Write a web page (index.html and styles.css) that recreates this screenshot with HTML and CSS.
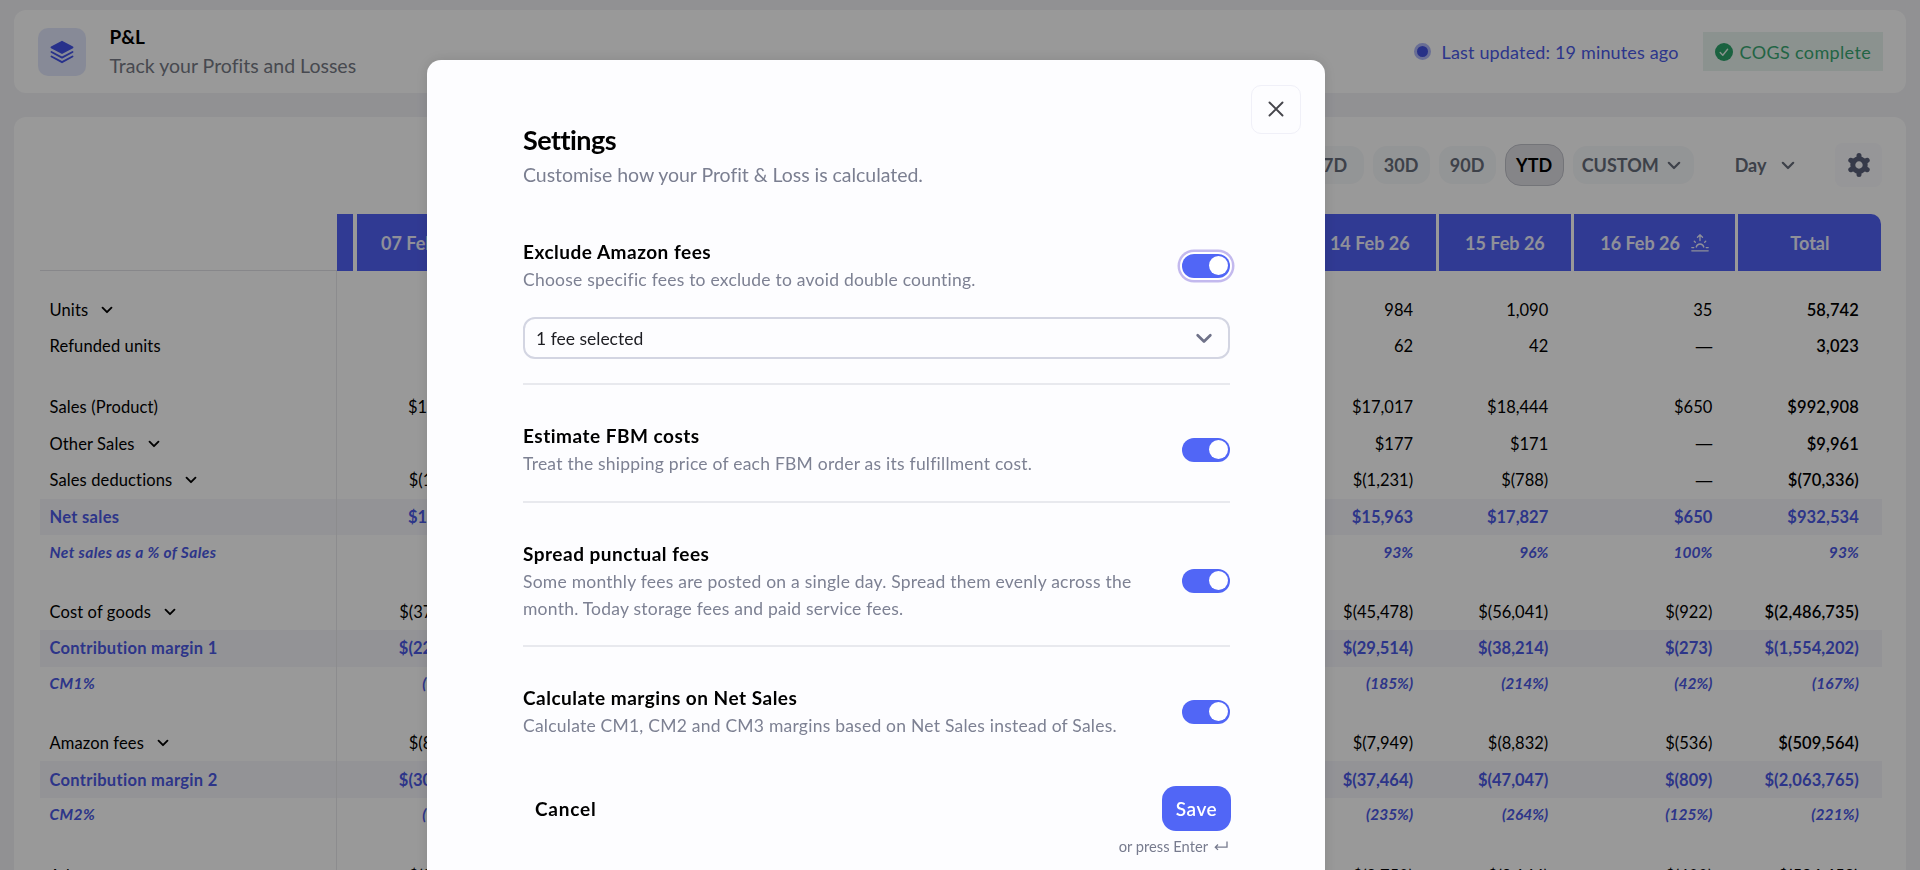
FILE: index.html
```html
<!DOCTYPE html>
<html lang="en">
<head>
<meta charset="UTF-8">
<meta name="viewport" content="width=device-width, initial-scale=1.0">
<title>P&amp;L</title>
<link rel="stylesheet" href="styles.css">
</head>
<body>
<svg class="defs" width="0" height="0">
    <symbol id="chevron" viewBox="0 0 14 9"><path d="M1.8 1.8 7 7l5.2-5.2" fill="none" stroke="currentColor" stroke-width="2.2" stroke-linecap="round" stroke-linejoin="round"/></symbol>
</svg>

<header class="card topbar">
    <div class="logo">
        <svg width="24" height="24" viewBox="0 0 24 24" fill="none" stroke="#4353e8" stroke-width="1.9" stroke-linecap="round" stroke-linejoin="round">
            <path d="M12 1.8 22.5 7.3 12 13 1.5 7.3z" fill="#4353e8"/>
            <path d="M1.5 12 12 17.6 22.5 12M1.5 16.5 12 22.2l10.5-5.7"/>
        </svg>
    </div>
    <div class="heading">
        <h1>P&amp;L</h1>
        <p>Track your Profits and Losses</p>
    </div>
    <div class="updated"><span class="dot"></span>Last updated: 19 minutes ago</div>
    <div class="cogs">
        <svg width="18" height="18" viewBox="0 0 18 18"><circle cx="9" cy="9" r="9" fill="#2ca36b"/><path d="m5.2 9.5 2.6 2.8 4.8-6" fill="none" stroke="#e3f5ec" stroke-width="1.4" stroke-linecap="round" stroke-linejoin="round"/></svg>
        COGS complete
    </div>
</header>

<main class="card panel">
    <div class="toolbar">
        <span class="pill">7D</span>
        <span class="pill">30D</span>
        <span class="pill">90D</span>
        <span class="pill active">YTD</span>
        <span class="pill custom">CUSTOM <svg width="14" height="9"><use href="#chevron"/></svg></span>
        <span class="period">Day <svg width="14" height="9"><use href="#chevron"/></svg></span>
        <span class="gear">
            <svg width="26" height="26" viewBox="-13 -13 26 26" fill="none" stroke="#5b617b">
                <circle r="6.2" stroke-width="5"/>
                <path stroke-width="5" stroke-linecap="round" d="M0-7.5V-9.5M0 7.5v2M6.5-3.75l1.7-1M6.5 3.75l1.7 1M-6.5-3.75l-1.7-1M-6.5 3.75l-1.7 1"/>
            </svg>
        </span>
    </div>

    <div class="table">
        <div class="row head">
            <span class="label"></span><b></b><b class="first-day">07 Feb 26</b><b class="skip"></b><b>14 Feb 26</b><b>15 Feb 26</b>
            <b>16 Feb 26
                <svg width="18" height="18" viewBox="0 0 18 18" fill="none" stroke="#eef0ff" stroke-width="1.3" stroke-linecap="round"><path d="M9 6.5V1M6.5 3.2 9 .8l2.5 2.4M5.2 13a3.9 3.9 0 0 1 7.6 0M3.3 7.3l1 1M14.7 7.3l-1 1M.8 13.6h2M15.2 13.6h2M.8 16.8h16.4"/></svg>
            </b>
            <b class="last">Total</b>
        </div>
        <div class="row first"><span class="label">Units <svg width="12" height="8"><use href="#chevron"/></svg></span><i></i><i>912</i><i>984</i><i>1,090</i><i>35</i><i>58,742</i></div>
        <div class="row"><span class="label">Refunded units</span><i></i><i>51</i><i>62</i><i>42</i><i class="dash">—</i><i>3,023</i></div>

        <div class="row gap"><span class="label">Sales (Product)</span><i></i><i>$16,984</i><i>$17,017</i><i>$18,444</i><i>$650</i><i>$992,908</i></div>
        <div class="row"><span class="label">Other Sales <svg width="12" height="8"><use href="#chevron"/></svg></span><i></i><i>$92</i><i>$177</i><i>$171</i><i class="dash">—</i><i>$9,961</i></div>
        <div class="row"><span class="label">Sales deductions <svg width="12" height="8"><use href="#chevron"/></svg></span><i></i><i>$(1,340)</i><i>$(1,231)</i><i>$(788)</i><i class="dash">—</i><i>$(70,336)</i></div>
        <div class="row sum"><span class="label">Net sales</span><i></i><i>$15,736</i><i>$15,963</i><i>$17,827</i><i>$650</i><i>$932,534</i></div>
        <div class="row ratio"><span class="label">Net sales as a % of Sales</span><i></i><i>92%</i><i>93%</i><i>96%</i><i>100%</i><i>93%</i></div>

        <div class="row gap"><span class="label">Cost of goods <svg width="12" height="8"><use href="#chevron"/></svg></span><i></i><i>$(37,945)</i><i>$(45,478)</i><i>$(56,041)</i><i>$(922)</i><i>$(2,486,735)</i></div>
        <div class="row sum"><span class="label">Contribution margin 1</span><i></i><i>$(22,209)</i><i>$(29,514)</i><i>$(38,214)</i><i>$(273)</i><i>$(1,554,202)</i></div>
        <div class="row ratio"><span class="label">CM1%</span><i></i><i>(141%)</i><i>(185%)</i><i>(214%)</i><i>(42%)</i><i>(167%)</i></div>

        <div class="row gap"><span class="label">Amazon fees <svg width="12" height="8"><use href="#chevron"/></svg></span><i></i><i>$(8,018)</i><i>$(7,949)</i><i>$(8,832)</i><i>$(536)</i><i>$(509,564)</i></div>
        <div class="row sum"><span class="label">Contribution margin 2</span><i></i><i>$(30,227)</i><i>$(37,464)</i><i>$(47,047)</i><i>$(809)</i><i>$(2,063,765)</i></div>
        <div class="row ratio"><span class="label">CM2%</span><i></i><i>(192%)</i><i>(235%)</i><i>(264%)</i><i>(125%)</i><i>(221%)</i></div>

        <div class="row gap ads"><span class="label">Ads costs</span><i></i><i>$(9,102)</i><i>$(8,750)</i><i>$(9,144)</i><i>$(600)</i><i>$(584,458)</i></div>
    </div>
</main>

<div class="overlay">
    <div class="modal">
        <button class="close"><svg width="16" height="16" viewBox="0 0 16 16" fill="none" stroke="#45454b" stroke-width="1.9" stroke-linecap="round"><path d="m1.5 1.5 13 13M14.5 1.5l-13 13"/></svg></button>
        <h2>Settings</h2>
        <p class="intro">Customise how your Profit &amp; Loss is calculated.</p>

        <section>
            <div class="setting">
                <div class="text"><h3>Exclude Amazon fees</h3><p>Choose specific fees to exclude to avoid double counting.</p></div>
                <span class="toggle focus"></span>
            </div>
            <div class="select">1 fee selected <svg width="18" height="11"><use href="#chevron"/></svg></div>
        </section>
        <section>
            <div class="setting">
                <div class="text"><h3>Estimate FBM costs</h3><p>Treat the shipping price of each FBM order as its fulfillment cost.</p></div>
                <span class="toggle"></span>
            </div>
        </section>
        <section>
            <div class="setting">
                <div class="text"><h3>Spread punctual fees</h3><p>Some monthly fees are posted on a single day. Spread them evenly across the month. Today storage fees and paid service fees.</p></div>
                <span class="toggle"></span>
            </div>
        </section>
        <section>
            <div class="setting">
                <div class="text"><h3>Calculate margins on Net Sales</h3><p>Calculate CM1, CM2 and CM3 margins based on Net Sales instead of Sales.</p></div>
                <span class="toggle"></span>
            </div>
        </section>

        <div class="actions">
            <button class="cancel">Cancel</button>
            <button class="save">Save</button>
        </div>
        <p class="hint">or press Enter <svg width="14" height="10" viewBox="0 0 14 10" fill="none" stroke="#777b8e" stroke-width="1.3"><path d="M13 .5v5.7H1.5M4 3.5 1.3 6.2 4 8.9"/></svg></p>
    </div>
</div>
</body>
</html>
```
FILE: styles.css
```css
* {
    box-sizing: border-box;
    margin: 0;
    padding: 0;
}
body {
    height: 100vh;
    overflow: hidden;
    padding: 10px 14px 0;
    background: #f2f2f6;
    font-family: Lato, "Liberation Sans", sans-serif;
    font-size: 16.5px;
    font-variant-ligatures: none;
    color: #000;
}
button {
    font-family: inherit;
    border: none;
    background: none;
}
.defs {
    display: block;
    position: absolute;
}
.card {
    background: #fff;
    border-radius: 12px;
}

/* top bar */
.topbar {
    display: flex;
    align-items: center;
    height: 83px;
    padding: 0 23px 0 24px;
}
.logo {
    display: flex;
    align-items: center;
    justify-content: center;
    width: 48px;
    height: 48px;
    border-radius: 10px;
    background: #e2e7fc;
}
.heading {
    margin: 0 0 0 23.5px;
}
.heading h1 {
    font-size: 19px;
    line-height: 28px;
    font-weight: 700;
}
.heading p {
    font-size: 19.5px;
    line-height: 30px;
    color: #777b85;
}
.updated {
    display: flex;
    align-items: center;
    gap: 11px;
    margin-left: auto;
    font-size: 18px;
    letter-spacing: 0.16px;
    color: #4c5ae8;
}
.dot {
    width: 17px;
    height: 17px;
    border-radius: 50%;
    border: 3px solid #b0b8f8;
    background: #4452e2;
}
.cogs {
    display: flex;
    align-items: center;
    gap: 7px;
    height: 39px;
    margin-left: 24px;
    padding: 0 12px;
    font-size: 18px;
    letter-spacing: 0.35px;
    color: #3aa873;
    background: #e8f3ee;
}

/* date range */
.panel {
    height: 753px;
    overflow: hidden;
    margin-top: 24px;
    padding: 26px 24px 0 26px;
    border-radius: 12px 12px 0 0;
}
.toolbar {
    display: flex;
    align-items: center;
    justify-content: flex-end;
    gap: 9px;
    height: 44px;
    font-size: 18px;
    font-weight: 700;
    color: #676d7b;
}
.pill {
    display: flex;
    align-items: center;
    justify-content: center;
    width: 57px;
    height: 38px;
    border-radius: 14px;
    background: #f6f8fa;
}
.pill.active {
    width: 59px;
    height: 42px;
    border: 1px solid #c0c1c9;
    border-radius: 16px;
    background: #dedee3;
    color: #000;
}
.pill.custom {
    justify-content: flex-start;
    width: 121px;
    padding-left: 9px;
    gap: 8px;
}
.period {
    display: flex;
    align-items: center;
    gap: 14px;
    margin-left: 32px;
}
.gear {
    display: flex;
    align-items: center;
    justify-content: center;
    width: 47px;
    height: 44px;
    margin-left: 31.5px;
    border-radius: 8px;
    background: #fafafd;
}

/* table */
.table {
    margin-top: 27px;
}
.row {
    display: grid;
    grid-template-columns: 293.4px 16px 131.6px 808.6px 131.6px 131.6px 160.5px 143px;
    column-gap: 3.6px;
    height: 36.6px;
    width: 1841.5px;
}
.row .label {
    display: flex;
    align-items: center;
    gap: 13px;
    margin-right: -3.6px;
    padding-left: 9.5px;
    border-right: 1px solid #e9e9ed;
    letter-spacing: 0.12px;
}
.row i {
    display: flex;
    align-items: center;
    justify-content: flex-end;
    font-style: normal;
    padding-right: 22.5px;
}
.row i:nth-of-type(2) {
    padding-right: 19px;
}
.row i:nth-of-type(3) {
    grid-column: 5;
}
.row i:last-child {
    font-weight: 600;
    letter-spacing: 0.1px;
}
.row i.dash {
    font-family: "Liberation Sans", sans-serif;
}
.row.head {
    height: 57px;
}
.head .label {
    border-right: none;
    border-bottom: 1px solid #e2e2e6;
}
.head b {
    display: flex;
    align-items: center;
    justify-content: center;
    gap: 11px;
    background: #5161f5;
    color: #eef0ff;
    font-size: 18px;
    font-weight: 700;
}
.head b.first-day {
    padding-right: 3px;
}
.head b.last {
    border-radius: 0 10px 0 0;
}
.row.first {
    height: 57px;
}
.row.first > * {
    padding-top: 20.4px;
}
.row.gap {
    height: 60.8px;
}
.row.gap > * {
    padding-top: 24.2px;
}
.row.ads > * {
    padding-top: 27px;
}
.row.sum {
    color: #4c59e4;
    font-weight: 700;
    background: #f5f5fb;
}
.row.sum .label {
    letter-spacing: 0.3px;
}
.row.ratio {
    height: 34px;
    font-size: 15.5px;
    font-weight: 700;
    color: #4c59e4;
}
.row.ratio > * {
    padding-bottom: 1px;
}
.row.ratio .label {
    letter-spacing: 0.4px;
}
.row.ratio .label,
.row.ratio i {
    font-style: italic;
}
.row.sum i:last-child,
.row.ratio i:last-child {
    font-weight: 700;
}

/* settings modal */
.overlay {
    position: fixed;
    inset: 0;
    overflow: hidden;
    background: rgba(0, 0, 0, 0.4);
}
.modal {
    position: relative;
    width: 898px;
    height: 840px;
    margin: 59.5px 0 0 427px;
    padding: 61.5px 95px 0 96px;
    border-radius: 14px;
    background: #fdfdff;
    box-shadow: 0 0 14px rgba(0, 0, 0, 0.12);
}
.close {
    position: absolute;
    top: 25px;
    right: 24px;
    display: flex;
    align-items: center;
    justify-content: center;
    width: 50px;
    height: 49px;
    border: 1px solid #f0f0f8;
    border-radius: 10px;
}
.modal h2 {
    font-size: 27px;
    line-height: 38px;
    font-weight: 700;
    letter-spacing: -0.55px;
}
.intro {
    font-size: 19.5px;
    line-height: 32px;
    letter-spacing: -0.04px;
    color: #7b7f91;
}
.modal section {
    padding-top: 37px;
    padding-bottom: 23.5px;
    border-bottom: 2px solid #e8e9ee;
}
.intro + section {
    padding-top: 47px;
    padding-bottom: 24px;
}
.modal section:nth-of-type(4) {
    border-bottom: none;
}
.setting {
    display: flex;
    align-items: center;
    justify-content: space-between;
}
.text {
    width: 630px;
}
.text h3 {
    font-size: 19px;
    line-height: 28px;
    font-weight: 700;
    letter-spacing: 0.5px;
}
.text p {
    font-size: 17.5px;
    line-height: 27px;
    letter-spacing: 0.23px;
    color: #7d8193;
}
.toggle {
    display: flex;
    align-items: center;
    justify-content: flex-end;
    width: 48px;
    height: 24px;
    padding-right: 2px;
    border-radius: 12px;
    background: #5166f6;
}
.toggle::after {
    content: "";
    width: 19px;
    height: 19px;
    border-radius: 50%;
    background: #fff;
}
.toggle.focus {
    box-shadow: 0 0 0 2px #fff, 0 0 0 4.5px #c3b9ee;
}
.select {
    display: flex;
    align-items: center;
    justify-content: space-between;
    height: 42px;
    margin-top: 24px;
    padding: 0 15px 0 11px;
    border: 2px solid #d3d5e2;
    border-radius: 12px;
    font-size: 17.5px;
    color: #1d1d22;
}
.select svg {
    color: #6f7289;
}
.actions {
    display: flex;
    align-items: center;
    justify-content: space-between;
    margin: 23px -1px 0 0;
}
.actions button {
    height: 45px;
    font-size: 19px;
    font-weight: 700;
    letter-spacing: 0.8px;
}
.cancel {
    padding: 0 12px;
    color: #000;
}
.actions .save {
    width: 69px;
    border-radius: 14px;
    background: #5166f6;
    color: #fff;
    font-weight: 600;
    letter-spacing: 0.5px;
}
.hint {
    display: flex;
    align-items: center;
    justify-content: flex-end;
    gap: 6px;
    margin-top: 6px;
    padding-right: 2px;
    font-size: 14.7px;
    line-height: 18px;
    color: #777b8e;
}
```
